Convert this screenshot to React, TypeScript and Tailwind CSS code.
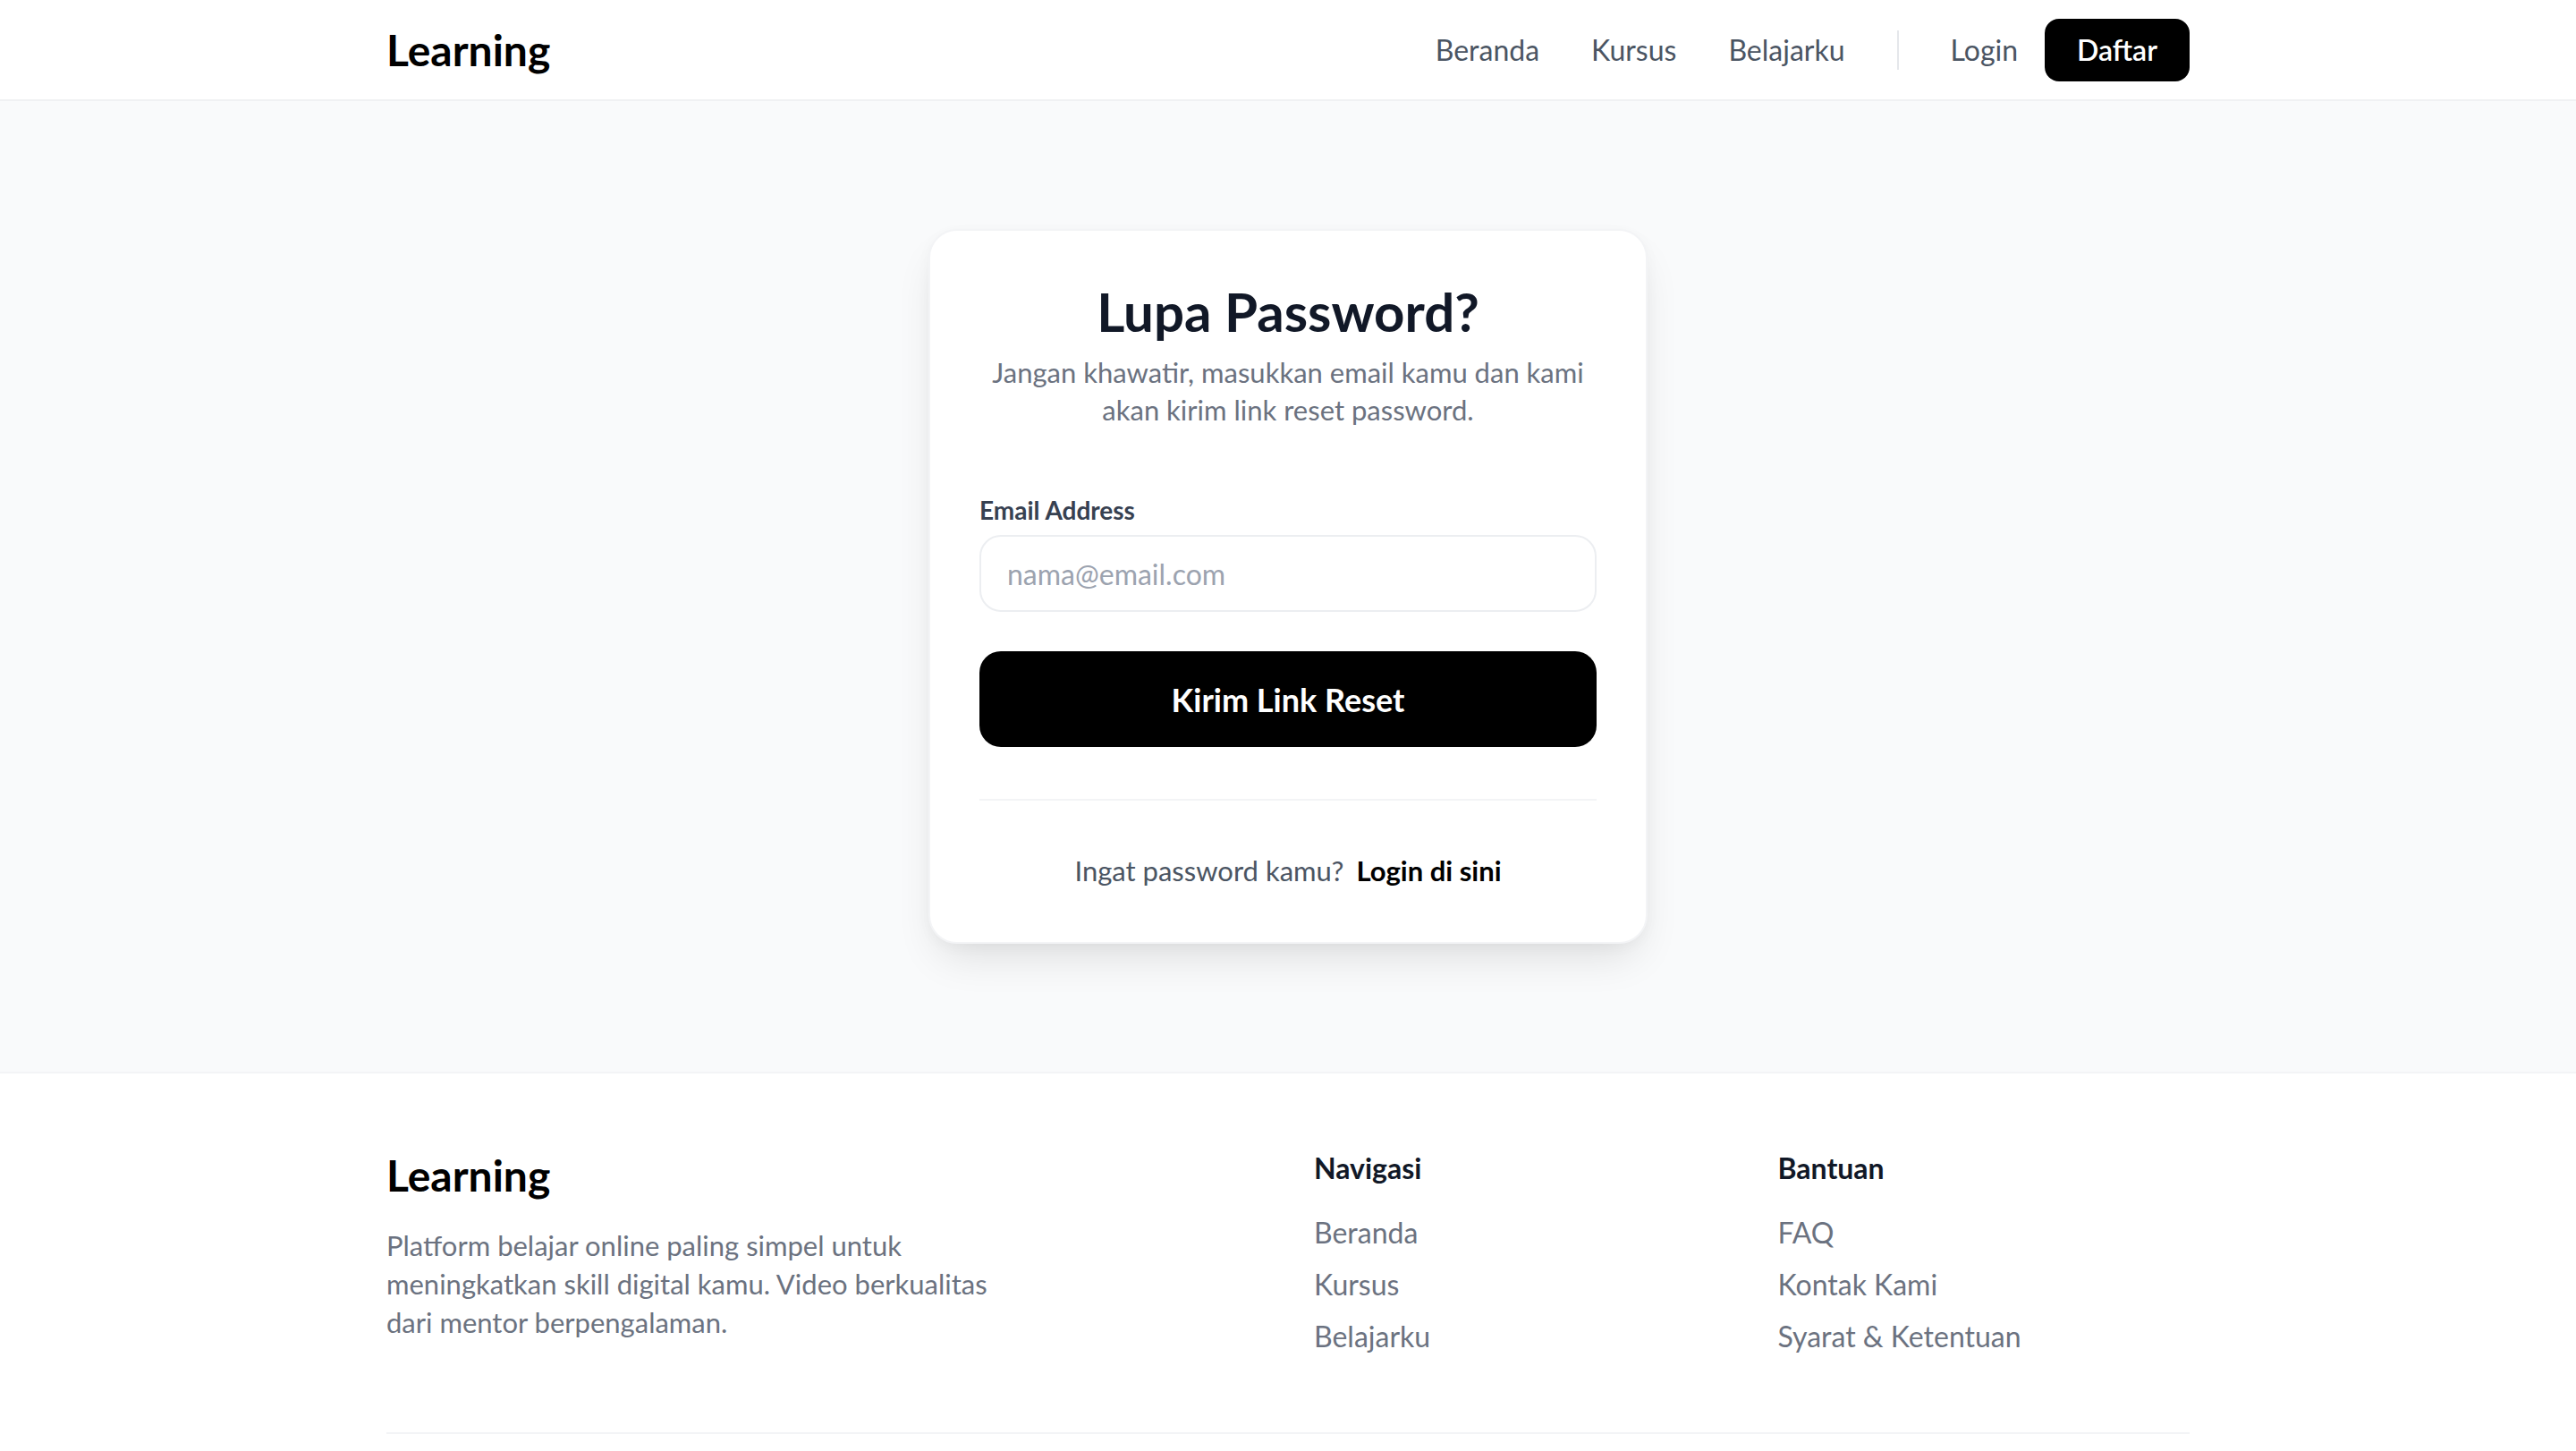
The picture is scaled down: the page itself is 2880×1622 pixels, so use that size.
import React from "react";

const navLinks = ["Beranda", "Kursus", "Belajarku"];
const footerNav = ["Beranda", "Kursus", "Belajarku"];
const footerHelp = ["FAQ", "Kontak Kami", "Syarat & Ketentuan"];

const Navbar = () => {
  return (
    <nav className="h-[113px] bg-white border-b-2 border-[#f0f1f3]">
      <div className="mx-auto w-[2016px] h-full flex items-center justify-between">
        <a href="/" className="text-[48px] leading-[64px] font-bold text-black">
          Learning
        </a>
        <div className="flex items-center">
          <ul className="flex items-center gap-[58px]">
            {navLinks.map((item) => (
              <li key={item}>
                <a href="#" className="text-[32px] leading-[48px] text-[#4b5563]">
                  {item}
                </a>
              </li>
            ))}
          </ul>
          <div className="mx-[58px] h-[44px] w-[2px] bg-[#e5e7eb]" />
          <a href="/login" className="text-[32px] leading-[48px] text-[#4b5563]">
            Login
          </a>
          <a
            href="/daftar"
            className="ml-[30px] h-[70px] px-[36px] flex items-center rounded-[16px] bg-black text-white text-[32px] font-semibold"
          >
            Daftar
          </a>
        </div>
      </div>
    </nav>
  );
};

const ForgotCard = () => {
  return (
    <div className="w-[804px] bg-white rounded-[32px] border-2 border-[#f3f4f6] px-[55px] pt-[54px] pb-[56px] shadow-[0_24px_48px_-12px_rgba(0,0,0,0.12),0_4px_16px_rgba(0,0,0,0.03)]">
      <h1 className="text-center text-[60px] leading-[72px] font-bold text-[#111827]">
        Lupa Password?
      </h1>
      <p className="mt-[11px] text-center text-[31px] leading-[42px] text-[#6b7280]">
        Jangan khawatir, masukkan email kamu dan kami
        <br />
        akan kirim link reset password.
      </p>

      <form className="mt-[71px]" onSubmit={(e) => e.preventDefault()}>
        <label className="block text-[28px] leading-[40px] font-bold text-[#374151]">
          Email Address
        </label>
        <input
          type="email"
          placeholder="nama@email.com"
          className="mt-[8px] block w-full h-[86px] rounded-[24px] border-2 border-[#eceef1] px-[29px] text-[32px] text-[#111827] placeholder:text-[#9ca3af] outline-none"
        />
        <button
          type="submit"
          className="mt-[44px] w-full h-[107px] rounded-[24px] bg-black text-white text-[36px] font-bold"
        >
          Kirim Link Reset
        </button>
      </form>

      <div className="mt-[58px] h-[2px] bg-[#f3f4f6]" />

      <p className="mt-[54px] flex justify-center text-[31px] leading-[48px]">
        <span className="text-[#4b5563]">Ingat password kamu?</span>
        <a href="/login" className="ml-[14px] font-bold text-black">
          Login di sini
        </a>
      </p>
    </div>
  );
};

const Footer = () => {
  return (
    <footer className="bg-white border-t-2 border-[#f3f4f6]">
      <div className="mx-auto w-[2016px] pt-[82px]">
        <div className="grid grid-cols-4 gap-x-[58px] pb-[83px]">
          <div className="col-span-2">
            <div className="text-[48px] leading-[64px] font-bold text-black">Learning</div>
            <p className="mt-[25px] text-[31px] leading-[43px] text-[#6b7280]">
              Platform belajar online paling simpel untuk
              <br />
              meningkatkan skill digital kamu. Video berkualitas
              <br />
              dari mentor berpengalaman.
            </p>
          </div>
          <div>
            <h4 className="text-[32px] leading-[48px] font-bold text-[#111827]">Navigasi</h4>
            <ul className="mt-[24px] flex flex-col gap-[10px]">
              {footerNav.map((item) => (
                <li key={item} className="text-[32px] leading-[48px] text-[#6b7280]">
                  {item}
                </li>
              ))}
            </ul>
          </div>
          <div>
            <h4 className="text-[32px] leading-[48px] font-bold text-[#111827]">Bantuan</h4>
            <ul className="mt-[24px] flex flex-col gap-[10px]">
              {footerHelp.map((item) => (
                <li key={item} className="text-[32px] leading-[48px] text-[#6b7280]">
                  {item}
                </li>
              ))}
            </ul>
          </div>
        </div>
        <div className="border-t-2 border-[#f3f4f6] pb-[48px]">
          <p className="mt-[72px] text-center text-[28px] text-[#9ca3af]">
            © 2024 Learning. All rights reserved.
          </p>
        </div>
      </div>
    </footer>
  );
};

export default function App() {
  return (
    <div className="min-h-screen bg-white font-['Lato',sans-serif]">
      <Navbar />
      <main className="bg-[#f9fafb] pt-[143px] pb-[143px] flex justify-center">
        <ForgotCard />
      </main>
      <Footer />
    </div>
  );
}
